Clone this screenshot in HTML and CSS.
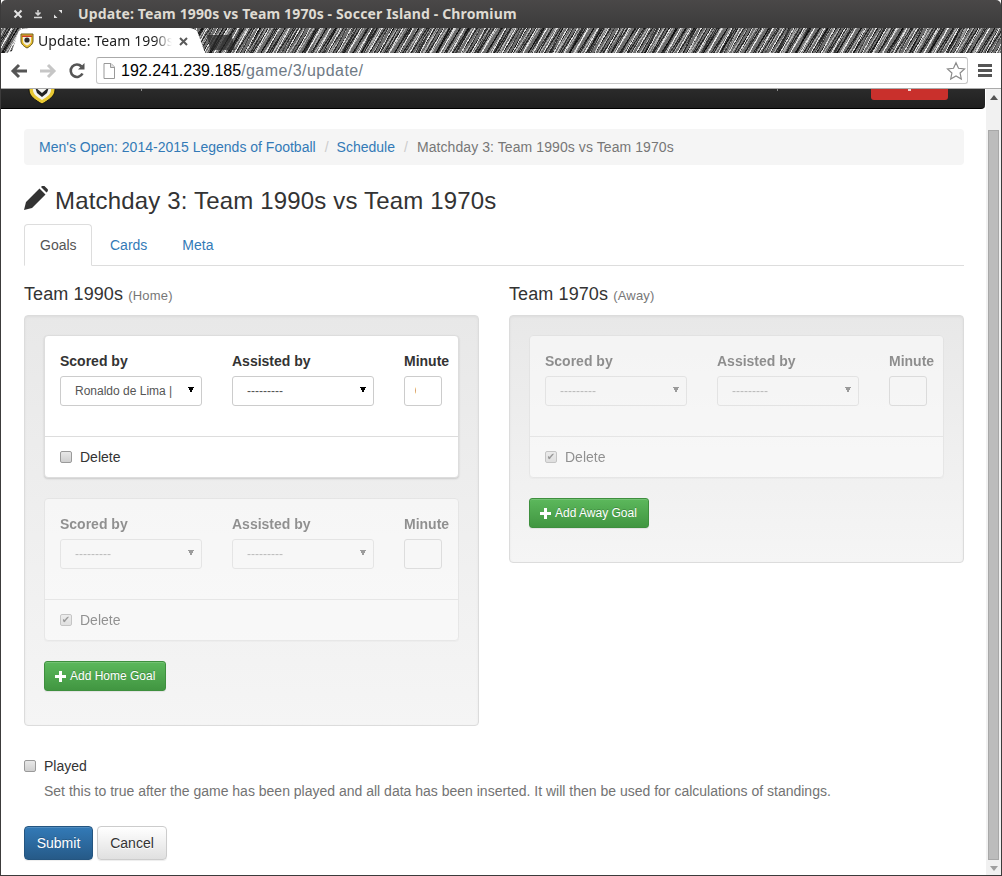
FILE: index.html
```html
<!DOCTYPE html>
<html lang="en">
<head>
    <meta charset="UTF-8">
    <title>Update: Team 1990s vs Team 1970s - Soccer Island</title>
    <link rel="stylesheet" href="styles.css">
</head>
<body>
<div class="window">
    <!-- title bar -->
    <div class="titlebar">
        <div class="win-buttons">
            <svg width="10" height="10" viewBox="0 0 10 10"><path d="M1.500 1.500l7 7M8.500 1.500l-7 7" stroke="#e4e4e4" stroke-width="2"/></svg>
            <svg width="10" height="10" viewBox="0 0 10 10"><path d="M5 1v4M2.500 3.500L5 6l2.500-2.500M1 8.500h8" stroke="#d8d8d8" stroke-width="1.500" fill="none"/></svg>
            <svg width="10" height="10" viewBox="0 0 10 10"><path d="M5.500 1H9v3.500zM4.500 9H1V5.500z" fill="#e4e4e4"/></svg>
        </div>
        <span class="window-title">Update: Team 1990s vs Team 1970s - Soccer Island - Chromium</span>
    </div>

    <!-- tab strip -->
    <div class="tabstrip">
        <div class="tab">
            <svg class="favicon" width="16" height="16" viewBox="0 0 16 16">
                <path d="M2 1h12v7c0 3-3 5.500-6 7-3-1.500-6-4-6-7z" fill="#e8c030" stroke="#6d5a1a"/>
                <path d="M4 3.500h8v4.500c0 2-2 3.500-4 4.500-2-1-4-2.500-4-4.500z" fill="#f4f0e4"/>
                <circle cx="8" cy="7" r="2.600" fill="#2b2b2b"/>
                <path d="M3 2.500h10v1.500H3z" fill="#c8402a"/>
            </svg>
            <span class="tab-title">Update: Team 1990s</span>
            <svg class="tab-close" width="9" height="9" viewBox="0 0 9 9"><path d="M1 1l7 7M8 1L1 8" stroke="#5a5a5a" stroke-width="2"/></svg>
        </div>
        <div class="newtab"></div>
    </div>

    <!-- toolbar -->
    <div class="toolbar">
        <svg class="nav-icon" width="18" height="16" viewBox="0 0 18 16"><path d="M17 8H4M9 2L3 8l6 6" stroke="#555" stroke-width="3" fill="none"/></svg>
        <svg class="nav-icon" width="18" height="16" viewBox="0 0 18 16"><path d="M1 8h13M9 2l6 6-6 6" stroke="#c6c6c6" stroke-width="3" fill="none"/></svg>
        <svg class="nav-icon" width="18" height="18" viewBox="0 0 18 18"><path d="M14.500 11.500A6.200 6.200 0 1 1 13.500 4.500" stroke="#555" stroke-width="2.600" fill="none"/><path d="M10 7.500h6.500V1z" fill="#555"/></svg>
        <div class="omnibox">
            <svg width="12" height="16" viewBox="0 0 12 16"><path d="M1 .5h7l3.500 3.500v11.500H1z" fill="#fff" stroke="#999"/><path d="M7.500 .5v4h4" fill="#e0e0e0" stroke="#999"/></svg>
            <span class="url"><span class="url-host">192.241.239.185</span>/game/3/update/</span>
            <svg class="star" width="20" height="20" viewBox="0 0 20 20"><path d="M10 1.800l2.500 5.500 6 .7-4.400 4 1.200 6L10 15l-5.300 3 1.200-6-4.400-4 6-.7z" fill="#fff" stroke="#8a8a8a" stroke-width="1.200"/></svg>
        </div>
        <div class="menu-icon"><i></i><i></i><i></i></div>
    </div>

    <!-- page -->
    <div class="viewport">
        <div class="page">
            <div class="navbar">
                <svg class="brand" width="30" height="16" viewBox="0 0 30 16">
                    <path d="M2 -8h26v9c0 6-6 10-13 14C8 11 2 7 2 1z" fill="#e8c832" stroke="#111"/>
                    <path d="M6 -4h18v5c0 4-4 7-9 10-5-3-9-6-9-10z" fill="#f4f4f0"/>
                    <path d="M8 -2l7 6 7-6-2 6-5 4-5-4z" fill="#222"/>
                </svg>
                <span class="speck first"></span>
                <span class="speck second"></span>
                <span class="logout"><span class="speck light"></span></span>
            </div>
            <div class="container">
                <ol class="breadcrumb">
                    <li><a href="#">Men's Open: 2014-2015 Legends of Football</a></li>
                    <li><a href="#">Schedule</a></li>
                    <li class="active">Matchday 3: Team 1990s vs Team 1970s</li>
                </ol>

                <h3 class="page-title">
                    <svg width="24" height="24" viewBox="0 0 24 24"><path d="M0 24l2-8L15.500 2.500l6 6L8 22zM17 1l1-1c.8-.6 1.700-.6 2.400 0l3.100 3.100c.6.700.6 1.600 0 2.400l-1 1z" fill="#333"/></svg>
                    <span>Matchday 3: Team 1990s vs Team 1970s</span>
                </h3>

                <ul class="tabs">
                    <li class="active"><a href="#">Goals</a></li>
                    <li class="wide"><a href="#">Cards</a></li>
                    <li><a href="#">Meta</a></li>
                </ul>

                <div class="teams">
                    <div class="team">
                        <h4>Team 1990s <small>(Home)</small></h4>
                        <div class="well">
                            <div class="panel">
                                <div class="panel-body">
                                    <div class="field">
                                        <label>Scored by</label>
                                        <select><option>Ronaldo de Lima | Team 1990s</option></select>
                                    </div>
                                    <div class="field">
                                        <label>Assisted by</label>
                                        <select><option>---------</option></select>
                                    </div>
                                    <div class="field minute">
                                        <label>Minute</label>
                                        <input type="number" value="0">
                                    </div>
                                </div>
                                <div class="panel-footer">
                                    <input type="checkbox" class="check">
                                    <span>Delete</span>
                                </div>
                            </div>
                            <div class="panel off">
                                <div class="panel-body">
                                    <div class="field">
                                        <label>Scored by</label>
                                        <select disabled><option>---------</option></select>
                                    </div>
                                    <div class="field">
                                        <label>Assisted by</label>
                                        <select disabled><option>---------</option></select>
                                    </div>
                                    <div class="field minute">
                                        <label>Minute</label>
                                        <input type="number" disabled>
                                    </div>
                                </div>
                                <div class="panel-footer">
                                    <input type="checkbox" class="check" checked disabled>
                                    <span>Delete</span>
                                </div>
                            </div>
                            <button class="btn btn-add"><span class="plus"></span>Add Home Goal</button>
                        </div>
                    </div>
                    <div class="team">
                        <h4>Team 1970s <small>(Away)</small></h4>
                        <div class="well">
                            <div class="panel off">
                                <div class="panel-body">
                                    <div class="field">
                                        <label>Scored by</label>
                                        <select disabled><option>---------</option></select>
                                    </div>
                                    <div class="field">
                                        <label>Assisted by</label>
                                        <select disabled><option>---------</option></select>
                                    </div>
                                    <div class="field minute">
                                        <label>Minute</label>
                                        <input type="number" disabled>
                                    </div>
                                </div>
                                <div class="panel-footer">
                                    <input type="checkbox" class="check" checked disabled>
                                    <span>Delete</span>
                                </div>
                            </div>
                            <button class="btn btn-add btn-away"><span class="plus"></span>Add Away Goal</button>
                        </div>
                    </div>
                </div>

                <div class="played">
                    <input type="checkbox" class="check">
                    <span>Played</span>
                </div>
                <p class="help">Set this to true after the game has been played and all data has been inserted. It will then be used for calculations of standings.</p>

                <div class="actions">
                    <button class="btn btn-submit">Submit</button>
                    <button class="btn btn-cancel">Cancel</button>
                </div>
            </div>
        </div>
        <div class="scrollbar">
            <span class="arrow-up"></span>
            <div class="thumb"></div>
            <span class="arrow-down"></span>
        </div>
    </div>
</div>
</body>
</html>
```

FILE: styles.css
```css
* {
    box-sizing: border-box;
}
html, body {
    margin: 0;
    height: 100%;
    overflow: hidden;
}
body {
    font-family: "Liberation Sans", Arial, sans-serif;
    font-size: 14px;
    line-height: 20px;
    color: #333;
}
.window {
    height: 876px;
    display: flex;
    flex-direction: column;
    background: #fff;
    border-right: 1px solid #3c3b3b;
    border-bottom: 1px solid #3c3b3b;
    border-left: 1px solid #3c3b3b;
}

/* title bar */
.titlebar {
    height: 28px;
    flex: none;
    display: flex;
    align-items: center;
    background: linear-gradient(#4a4848, #3c3b3b);
    border-radius: 5px 5px 0 0;
    padding-left: 12px;
}
.win-buttons {
    display: flex;
    gap: 10px;
    width: 65px;
}
.window-title {
    font-family: "Noto Sans", sans-serif;
    font-weight: 700;
    font-size: 14px;
    letter-spacing: .14px;
    color: #dfdbd2;
    white-space: nowrap;
}

/* tab strip */
.tabstrip {
    height: 25px;
    flex: none;
    display: flex;
    align-items: flex-end;
    padding-left: 6px;
    background-color: #6e6e6e;
    background-image:
        repeating-linear-gradient(119deg, rgba(255,255,255,.8) 0 1px, transparent 1px 5px, rgba(0,0,0,.6) 5px 6px, transparent 6px 9px),
        repeating-linear-gradient(123deg, rgba(0,0,0,.65) 0 1px, transparent 1px 3px, rgba(255,255,255,.45) 3px 4px, transparent 4px 7px),
        repeating-linear-gradient(116deg, rgba(255,255,255,.35) 0 1px, transparent 1px 11px, rgba(0,0,0,.5) 11px 13px, transparent 13px 17px);
}
.tab {
    width: 198px;
    height: 25px;
    background: #fff;
    display: flex;
    align-items: center;
    padding: 1px 17px 0 12px;
    clip-path: polygon(0 100%, 2.500% 92%, 6% 12%, 8% 3%, 11% 0, 92% 0, 94% 3%, 96% 12%, 100% 100%);
}
.favicon {
    flex: none;
    margin-right: 3px;
}
.tab-title {
    width: 134px;
    font-family: "Noto Sans", sans-serif;
    font-size: 14px;
    letter-spacing: .1px;
    color: #222;
    white-space: nowrap;
    overflow: hidden;
    -webkit-mask-image: linear-gradient(90deg, #000 87%, transparent);
    mask-image: linear-gradient(90deg, #000 87%, transparent);
}
.tab-close {
    margin-left: auto;
}
.newtab {
    width: 28px;
    height: 15px;
    margin: 0 0 3px 2px;
    background: #2a2a2a;
    opacity: .75;
    clip-path: polygon(0 0, 88% 0, 100% 100%, 12% 100%);
}

/* toolbar */
.toolbar {
    height: 36px;
    flex: none;
    display: flex;
    align-items: center;
    gap: 11px;
    padding: 0 9px 0 9px;
    background: #fff;
    border-bottom: 1px solid #aaa;
}
.omnibox {
    flex: 1;
    height: 27px;
    display: flex;
    align-items: center;
    gap: 6px;
    padding: 0 1px 0 6px;
    border: 1px solid #c8c8c8;
    border-top-color: #aaa;
    border-radius: 3px;
    margin: 0 -1px;
}
.url {
    flex: 1;
    font-size: 16px;
    letter-spacing: .45px;
    color: #6f7a85;
    white-space: nowrap;
}
.url-host {
    color: #000;
    letter-spacing: 0;
}
.menu-icon {
    width: 14px;
    display: flex;
    flex-direction: column;
    gap: 2px;
}
.menu-icon i {
    height: 3px;
    background: #555;
}

/* page */
.viewport {
    flex: 1;
    min-height: 0;
    display: flex;
}
.page {
    flex: 1;
    min-width: 0;
    overflow: hidden;
}
.navbar {
    height: 20px;
    display: flex;
    background: linear-gradient(#2b2b2b, #1f1f1f);
    border-bottom: 1px solid #000;
    border-bottom-right-radius: 4px;
    padding-left: 26px;
}
.brand {
    flex: none;
}
.speck {
    width: 1px;
    height: 2px;
    background: #8a8a8a;
}
.speck.first {
    margin-left: 84px;
}
.speck.second {
    margin-left: 635px;
}
.speck.light {
    display: block;
    width: 3px;
    margin: 0 auto;
    background: #f3d6d4;
}
.logout {
    width: 77px;
    height: 11px;
    margin: 0 37px 0 auto;
    background: #c9302c;
    border-radius: 0 0 3px 3px;
}
.container {
    padding: 20px 21px 0 23px;
}
.breadcrumb {
    list-style: none;
    display: flex;
    margin: 0 0 20px;
    padding: 8px 15px;
    height: 36px;
    background: #f5f5f5;
    border-radius: 4px;
}
.breadcrumb li + li::before {
    content: "/";
    padding: 0 8px 0 9px;
    color: #ccc;
}
.breadcrumb .active {
    color: #777;
    letter-spacing: .08px;
}
.breadcrumb .active::before {
    padding-right: 9px;
}
a {
    color: #337ab7;
    text-decoration: none;
}
.page-title {
    display: flex;
    align-items: flex-start;
    gap: 7px;
    margin: 0 0 10px;
    height: 29px;
    font-size: 24px;
    line-height: 26px;
    font-weight: 500;
    letter-spacing: .17px;
}
.page-title svg {
    margin-top: 1px;
}
.page-title span {
    padding-top: 3px;
}
.tabs {
    list-style: none;
    display: flex;
    margin: 0;
    padding: 0;
    height: 42px;
    border-bottom: 1px solid #ddd;
}
.tabs li {
    height: 42px;
}
.tabs a {
    display: block;
    height: 42px;
    padding: 10px 15px;
    margin-right: 2px;
    border: 1px solid transparent;
    border-radius: 4px 4px 0 0;
}
.tabs .active a {
    width: 68px;
    color: #555;
    background: #fff;
    border-color: #ddd #ddd #fff;
}
.tabs .wide a {
    padding-right: 16px;
}
.teams {
    display: grid;
    grid-template-columns: 455px 455px;
    column-gap: 30px;
    align-items: start;
}
.team h4 {
    margin: 18px 0 9px;
    font-size: 18px;
    line-height: 20px;
    font-weight: 500;
    letter-spacing: .1px;
}
.team small {
    font-size: 13px;
    letter-spacing: .2px;
    color: #777;
}
.well {
    padding: 19px;
    background: linear-gradient(#e8e8e8, #f5f5f5);
    border: 1px solid #dcdcdc;
    border-radius: 4px;
    box-shadow: inset 0 1px 3px rgba(0, 0, 0, .05);
    padding-bottom: 34px;
}
.panel {
    height: 143px;
    margin-bottom: 20px;
    background: #fff;
    border: 1px solid #ddd;
    border-radius: 4px;
    box-shadow: 0 1px 2px rgba(0, 0, 0, .15);
}
.panel.off {
    opacity: .5;
    box-shadow: 0 1px 1px rgba(0, 0, 0, .05);
}
.panel-body {
    height: 100px;
    display: flex;
    padding: 15px 0 0 15px;
}
.field {
    width: 172px;
    flex: none;
}
.field.minute {
    width: 45px;
}
.field label {
    display: block;
    margin-bottom: 5px;
    font-weight: 700;
    white-space: nowrap;
}
.field select {
    appearance: none;
    display: block;
    width: 142px;
    height: 30px;
    padding: 5px 29px 5px 14px;
    font-family: inherit;
    font-size: 12px;
    color: #555;
    background-color: #fff;
    background-image:
        linear-gradient(to top right, transparent 50%, #000 50%),
        linear-gradient(to top left, transparent 50%, #000 50%);
    background-size: 3px 6px, 3px 6px;
    background-position: 127px 10px, 130px 10px;
    background-repeat: no-repeat;
    border: 1px solid #ccc;
    border-radius: 3px;
}
.field input {
    display: block;
    width: 38px;
    height: 30px;
    padding: 5px 10px;
    font-family: inherit;
    font-size: 12px;
    color: #555;
    background: #fff;
    border: 1px solid #ccc;
    border-radius: 3px;
}
.panel-footer {
    height: 41px;
    display: flex;
    align-items: center;
    gap: 8px;
    padding: 0 15px;
    border-top: 1px solid #ddd;
}
.check {
    appearance: none;
    width: 12px;
    height: 12px;
    margin: 0;
    display: block;
    flex: none;
    background: linear-gradient(#e8e8e8, #cfcfcf);
    border: 1px solid #9a9a9a;
    border-radius: 2px;
}
.check:checked::before {
    content: "✔";
    display: block;
    font: 10px/10px "DejaVu Sans", sans-serif;
    text-align: center;
    color: #444;
}
.btn {
    display: inline-block;
    font-family: inherit;
    font-size: 14px;
    line-height: 20px;
    height: 34px;
    padding: 6px 0;
    text-align: center;
    border: 1px solid transparent;
    border-radius: 4px;
    box-shadow: inset 0 1px 0 rgba(255, 255, 255, .15), 0 1px 1px rgba(0, 0, 0, .075);
}
.btn-add {
    height: 30px;
    padding: 5px 10px;
    font-size: 12px;
    line-height: 18px;
    display: flex;
    align-items: center;
    color: #fff;
    text-shadow: 0 -1px 0 rgba(0, 0, 0, .2);
    background: linear-gradient(#5cb85c, #419641);
    border-color: #3e8f3e;
    border-radius: 3px;
}
.btn-away {
    width: 120px;
}
.plus {
    width: 11px;
    height: 11px;
    margin-right: 4px;
    background:
        linear-gradient(#fff, #fff) center / 11px 3px no-repeat,
        linear-gradient(#fff, #fff) center / 3px 11px no-repeat;
}
.btn-submit {
    width: 69px;
    color: #fff;
    text-shadow: 0 -1px 0 rgba(0, 0, 0, .2);
    background: linear-gradient(#337ab7, #265a88);
    border-color: #245580;
}
.btn-cancel {
    width: 70px;
    color: #333;
    text-shadow: 0 1px 0 #fff;
    background: linear-gradient(#fff, #e0e0e0);
    border-color: #ccc;
}
.played {
    display: flex;
    align-items: center;
    gap: 8px;
    margin-top: 30px;
}
.help {
    margin: 5px 0 25px 20px;
    color: #737373;
}
.actions {
    display: flex;
    gap: 4px;
}

/* scrollbar */
.scrollbar {
    width: 15px;
    flex: none;
    margin-left: 1px;
    display: flex;
    flex-direction: column;
    align-items: center;
    background: #f1f1f1;
}
.arrow-up {
    margin: 6px 0 30px;
    border: 4px solid transparent;
    border-top: 0;
    border-bottom: 5px solid #555;
}
.thumb {
    width: 11px;
    flex: 1;
    background: #bcbcbc;
    border: 1px solid #a8a8a8;
}
.arrow-down {
    margin: 6px 0 4px;
    border: 4px solid transparent;
    border-bottom: 0;
    border-top: 5px solid #a0a0a0;
}
```
